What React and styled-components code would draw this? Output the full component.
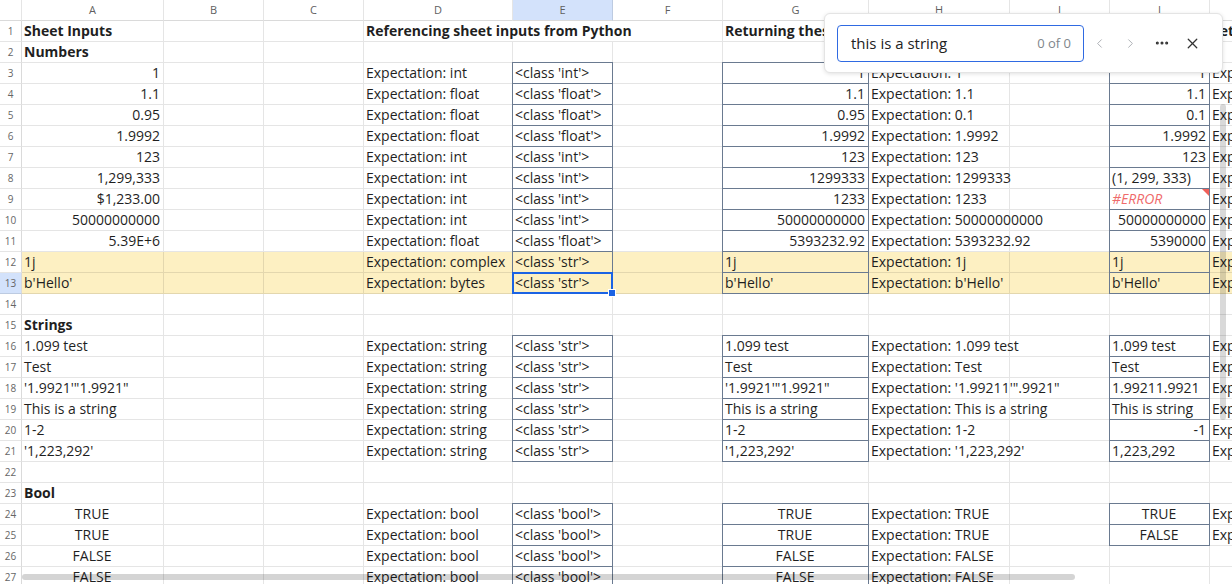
import React from 'react';
import styled, { createGlobalStyle, css } from 'styled-components';
import { ChevronLeft, ChevronRight, Ellipsis, X } from 'lucide-react';

const GlobalStyle = createGlobalStyle`
  html, body {
    margin: 0;
    padding: 0;
    overflow: hidden;
    background: #fff;
  }
  body {
    font-family: "Open Sans", "Liberation Sans", sans-serif;
    color: #1f1f1f;
  }
`;

const COLS = ['A', 'B', 'C', 'D', 'E', 'F', 'G', 'H', 'I', 'J', 'K'];
const WIDTHS = [142, 100, 100, 149, 100, 110, 146, 141, 100, 100, 100];
const LINE = 'rgba(0, 0, 0, 0.1)';
const BOX = '#6a7a90';
const YELLOW = '#fdf0c2';
const SELECT = '#1b63e4';

const n = (t) => ({ t, a: 'right' });
const c = (t) => ({ t, a: 'center' });

const rows = {
  1: {
    A: { t: 'Sheet Inputs', b: 1 },
    D: { t: 'Referencing sheet inputs from Python', b: 1, span: 3 },
    G: { t: 'Returning these inputs to the sheet', b: 1, span: 3 },
    K: { t: 'Set', b: 1 },
  },
  2: { A: { t: 'Numbers', b: 1 } },
  3: { A: n('1'), D: 'Expectation: int', E: "<class 'int'>", G: n('1'), H: 'Expectation: 1', J: n('1'), K: 'Expectation: 1' },
  4: { A: n('1.1'), D: 'Expectation: float', E: "<class 'float'>", G: n('1.1'), H: 'Expectation: 1.1', J: n('1.1'), K: 'Expectation: 1.1' },
  5: { A: n('0.95'), D: 'Expectation: float', E: "<class 'float'>", G: n('0.95'), H: 'Expectation: 0.1', J: n('0.1'), K: 'Expectation: 0.1' },
  6: { A: n('1.9992'), D: 'Expectation: float', E: "<class 'float'>", G: n('1.9992'), H: 'Expectation: 1.9992', J: n('1.9992'), K: 'Expectation: 1.9992' },
  7: { A: n('123'), D: 'Expectation: int', E: "<class 'int'>", G: n('123'), H: 'Expectation: 123', J: n('123'), K: 'Expectation: 123' },
  8: { A: n('1,299,333'), D: 'Expectation: int', E: "<class 'int'>", G: n('1299333'), H: 'Expectation: 1299333', J: '(1, 299, 333)', K: 'Expectation: 1299333' },
  9: { A: n('$1,233.00'), D: 'Expectation: int', E: "<class 'int'>", G: n('1233'), H: 'Expectation: 1233', J: { t: '#ERROR', err: 1 }, K: 'Expectation: 1233' },
  10: { A: n('50000000000'), D: 'Expectation: int', E: "<class 'int'>", G: n('50000000000'), H: 'Expectation: 50000000000', J: n('50000000000'), K: 'Expectation: 50000000000' },
  11: { A: n('5.39E+6'), D: 'Expectation: float', E: "<class 'float'>", G: n('5393232.92'), H: 'Expectation: 5393232.92', J: n('5390000'), K: 'Expectation: 5393232.92' },
  12: { A: '1j', D: 'Expectation: complex', E: "<class 'str'>", G: '1j', H: 'Expectation: 1j', J: '1j', K: 'Expectation: 1j' },
  13: { A: "b'Hello'", D: 'Expectation: bytes', E: { t: "<class 'str'>", sel: 1 }, G: "b'Hello'", H: "Expectation: b'Hello'", J: "b'Hello'", K: "Expectation: b'Hello'" },
  15: { A: { t: 'Strings', b: 1 } },
  16: { A: '1.099 test', D: 'Expectation: string', E: "<class 'str'>", G: '1.099 test', H: 'Expectation: 1.099 test', J: '1.099 test', K: 'Expectation: 1.099 test' },
  17: { A: 'Test', D: 'Expectation: string', E: "<class 'str'>", G: 'Test', H: 'Expectation: Test', J: 'Test', K: 'Expectation: Test' },
  18: { A: `'1.9921'"1.9921"`, D: 'Expectation: string', E: "<class 'str'>", G: `'1.9921'"1.9921"`, H: `Expectation: '1.99211'".9921"`, J: '1.99211.9921', K: 'Expectation: 1.99211.9921' },
  19: { A: 'This is a string', D: 'Expectation: string', E: "<class 'str'>", G: 'This is a string', H: 'Expectation: This is a string', J: 'This is string', K: 'Expectation: This is string' },
  20: { A: '1-2', D: 'Expectation: string', E: "<class 'str'>", G: '1-2', H: 'Expectation: 1-2', J: n('-1'), K: 'Expectation: -1' },
  21: { A: "'1,223,292'", D: 'Expectation: string', E: "<class 'str'>", G: "'1,223,292'", H: "Expectation: '1,223,292'", J: '1,223,292', K: 'Expectation: 1,223,292' },
  23: { A: { t: 'Bool', b: 1 } },
  24: { A: c('TRUE'), D: 'Expectation: bool', E: "<class 'bool'>", G: c('TRUE'), H: 'Expectation: TRUE', J: c('TRUE'), K: 'Expectation: TRUE' },
  25: { A: c('TRUE'), D: 'Expectation: bool', E: "<class 'bool'>", G: c('TRUE'), H: 'Expectation: TRUE', J: c('FALSE'), K: 'Expectation: FALSE' },
  26: { A: c('FALSE'), D: 'Expectation: bool', E: "<class 'bool'>", G: c('FALSE'), H: 'Expectation: FALSE' },
  27: { A: c('FALSE'), D: 'Expectation: bool', E: "<class 'bool'>", G: c('FALSE'), H: 'Expectation: FALSE' },
};

const boxedRanges = [
  ['E', 3, 13], ['G', 3, 13], ['J', 3, 13],
  ['E', 16, 21], ['G', 16, 21], ['J', 16, 21],
  ['E', 24, 27], ['G', 24, 27], ['J', 24, 25],
];
const isBoxed = (col, r) => boxedRanges.some(([cc, a, b]) => cc === col && r >= a && r <= b);
const tinted = [12, 13];

const Sheet = styled.div`
  position: relative;
  width: 1232px;
  height: 584px;
  overflow: hidden;
`;

const Grid = styled.div`
  display: grid;
  grid-template-columns: 22px ${WIDTHS.map((w) => `${w}px`).join(' ')};
  grid-template-rows: 21px;
  grid-auto-rows: 21px;
`;

const HeaderCell = styled.div`
  box-sizing: border-box;
  border-right: 1px solid ${LINE};
  border-bottom: 1px solid #dadada;
  background: ${(p) => (p.$active ? '#d3e2fb' : '#fff')};
  color: #5f5f5f;
  font-size: 11px;
  line-height: 20px;
  text-align: center;
`;

const RowNum = styled.div`
  box-sizing: border-box;
  border-right: 1px solid #dadada;
  border-bottom: 1px solid ${LINE};
  background: ${(p) => (p.$active ? '#d3e2fb' : '#fff')};
  color: #666;
  font-size: 10px;
  line-height: 20px;
  text-align: center;
`;

const Cell = styled.div`
  position: relative;
  box-sizing: border-box;
  grid-column: span ${(p) => p.$span || 1};
  border-right: 1px solid ${LINE};
  border-bottom: 1px solid ${LINE};
  background: ${(p) => (p.$tint ? YELLOW : 'transparent')};
  padding: 0 3px 0 2px;
  font-size: 14px;
  line-height: 20px;
  white-space: nowrap;
  text-align: ${(p) => p.$align || 'left'};
  font-weight: ${(p) => (p.$bold ? 700 : 400)};
  ${(p) =>
    p.$boxed &&
    css`
      border-right-color: ${BOX};
      border-bottom-color: ${BOX};
      box-shadow: -1px 0 0 ${BOX}, 0 -1px 0 ${BOX}, -1px -1px 0 ${BOX};
    `}
  ${(p) =>
    p.$error &&
    css`
      color: #ef6b6b;
      font-style: italic;
    `}
`;

const ErrorFlag = styled.span`
  position: absolute;
  top: 0;
  right: 0;
  width: 0;
  height: 0;
  border-top: 7px solid #f0605a;
  border-left: 7px solid transparent;
`;

const Selection = styled.span`
  position: absolute;
  z-index: 3;
  left: -1px;
  top: -1px;
  right: -1px;
  bottom: -1px;
  border: 2px solid ${SELECT};
  pointer-events: none;
`;

const FillHandle = styled.span`
  position: absolute;
  right: -5px;
  bottom: -5px;
  width: 6px;
  height: 6px;
  background: ${SELECT};
  border: 1px solid #fff;
`;

const HScroll = styled.div`
  position: absolute;
  z-index: 4;
  left: 22px;
  top: 574px;
  width: 1053px;
  height: 6px;
  border-radius: 3px;
  background: rgba(0, 0, 0, 0.17);
`;

const VScroll = styled.div`
  position: absolute;
  z-index: 4;
  left: 1220px;
  top: 104px;
  width: 6px;
  height: 316px;
  border-radius: 3px;
  background: rgba(0, 0, 0, 0.15);
`;

const FindBar = styled.div`
  position: absolute;
  z-index: 5;
  left: 824px;
  top: 13px;
  width: 399px;
  height: 60px;
  box-sizing: border-box;
  display: flex;
  align-items: center;
  padding-left: 12px;
  background: #fff;
  border: 1px solid #e4e4e4;
  border-radius: 6px;
  box-shadow: 0 1px 4px rgba(0, 0, 0, 0.12);
`;

const SearchField = styled.div`
  width: 247px;
  height: 37px;
  box-sizing: border-box;
  display: flex;
  align-items: center;
  justify-content: space-between;
  padding: 0 12px 0 13px;
  border: 1px solid #2f6ae2;
  border-radius: 4px;
  font-size: 15px;
  color: #222;
`;

const Count = styled.span`
  font-size: 13px;
  color: #80868b;
`;

const IconButton = styled.div`
  width: 31px;
  height: 31px;
  display: flex;
  align-items: center;
  justify-content: center;
  color: ${(p) => (p.$muted ? '#a2a6ab' : '#333')};
  &:first-of-type {
    margin-left: 4px;
  }
`;

function renderRow(r) {
  const data = rows[r] || {};
  const out = [
    <RowNum key={`n${r}`} $active={r === 13}>
      {r}
    </RowNum>,
  ];
  let skip = 0;
  COLS.forEach((col) => {
    if (skip > 0) {
      skip -= 1;
      return;
    }
    let cell = data[col];
    if (typeof cell === 'string') cell = { t: cell };
    cell = cell || {};
    if (cell.span) skip = cell.span - 1;
    out.push(
      <Cell
        key={`${col}${r}`}
        $span={cell.span}
        $align={cell.a}
        $bold={cell.b}
        $error={cell.err}
        $tint={tinted.includes(r)}
        $boxed={isBoxed(col, r)}
      >
        {cell.t}
        {cell.err && <ErrorFlag />}
        {cell.sel && (
          <Selection>
            <FillHandle />
          </Selection>
        )}
      </Cell>
    );
  });
  return out;
}

export default function App() {
  const rowNums = Array.from({ length: 27 }, (_, i) => i + 1);
  return (
    <Sheet>
      <GlobalStyle />
      <Grid>
        <HeaderCell />
        {COLS.map((col) => (
          <HeaderCell key={col} $active={col === 'E'}>
            {col}
          </HeaderCell>
        ))}
        {rowNums.map((r) => renderRow(r))}
      </Grid>

      <HScroll />
      <VScroll />

      <FindBar>
        <SearchField>
          <span>this is a string</span>
          <Count>0 of 0</Count>
        </SearchField>
        <IconButton $muted>
          <ChevronLeft size={15} strokeWidth={1.4} />
        </IconButton>
        <IconButton $muted>
          <ChevronRight size={15} strokeWidth={1.4} />
        </IconButton>
        <IconButton>
          <Ellipsis size={16} strokeWidth={2.6} />
        </IconButton>
        <IconButton>
          <X size={17} strokeWidth={1.8} />
        </IconButton>
      </FindBar>
    </Sheet>
  );
}
